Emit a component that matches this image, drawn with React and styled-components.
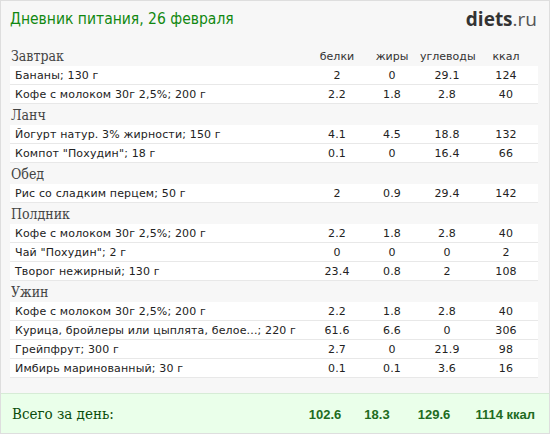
import React from "react";
import styled, { createGlobalStyle } from "styled-components";

const GlobalStyle = createGlobalStyle`
  html, body {
    margin: 0;
    padding: 0;
    background: #ffffff;
  }
  * {
    box-sizing: border-box;
  }
`;

const meals = [
  {
    title: "Завтрак",
    items: [
      ["Бананы; 130 г", "2", "0", "29.1", "124"],
      ["Кофе с молоком 30г 2,5%; 200 г", "2.2", "1.8", "2.8", "40"],
    ],
  },
  {
    title: "Ланч",
    items: [
      ["Йогурт натур. 3% жирности; 150 г", "4.1", "4.5", "18.8", "132"],
      ['Компот "Похудин"; 18 г', "0.1", "0", "16.4", "66"],
    ],
  },
  {
    title: "Обед",
    items: [["Рис со сладким перцем; 50 г", "2", "0.9", "29.4", "142"]],
  },
  {
    title: "Полдник",
    items: [
      ["Кофе с молоком 30г 2,5%; 200 г", "2.2", "1.8", "2.8", "40"],
      ['Чай "Похудин"; 2 г', "0", "0", "0", "2"],
      ["Творог нежирный; 130 г", "23.4", "0.8", "2", "108"],
    ],
  },
  {
    title: "Ужин",
    items: [
      ["Кофе с молоком 30г 2,5%; 200 г", "2.2", "1.8", "2.8", "40"],
      ["Курица, бройлеры или цыплята, белое...; 220 г", "61.6", "6.6", "0", "306"],
      ["Грейпфрут; 300 г", "2.7", "0", "21.9", "98"],
      ["Имбирь маринованный; 30 г", "0.1", "0.1", "3.6", "16"],
    ],
  },
];

const columns = ["белки", "жиры", "углеводы", "ккал"];

export default function App() {
  return (
    <>
      <GlobalStyle />
      <Page>
        <Header>
          <Title>Дневник питания, 26 февраля</Title>
          <Logo>
            <b>diets</b>.ru
          </Logo>
        </Header>
        <Diary>
          {meals.map((meal, i) => (
            <Meal key={meal.title}>
              <MealHead>
                <MealTitle>{meal.title}</MealTitle>
                {i === 0 && columns.map((c) => <ColHead key={c}>{c}</ColHead>)}
              </MealHead>
              {meal.items.map(([name, ...values], j) => (
                <Row key={j}>
                  <Name>{name}</Name>
                  {values.map((v, k) => (
                    <Cell key={k}>{v}</Cell>
                  ))}
                </Row>
              ))}
            </Meal>
          ))}
        </Diary>
        <Total>
          <TotalLabel>Всего за день:</TotalLabel>
          <TotalValue>102.6</TotalValue>
          <TotalValue>18.3</TotalValue>
          <TotalValue>129.6</TotalValue>
          <TotalValue $last>1114 ккал</TotalValue>
        </Total>
      </Page>
    </>
  );
}

const Page = styled.div`
  width: 550px;
  height: 434px;
  background: #f7f7f7;
  border: 1px solid #dedede;
  display: flex;
  flex-direction: column;
  overflow: hidden;
`;

const Header = styled.div`
  display: flex;
  justify-content: space-between;
  align-items: center;
  height: 36px;
  padding: 0 12px 0 9px;
`;

const Title = styled.h1`
  margin: 0;
  font-family: "DejaVu Sans", Verdana, sans-serif;
  font-stretch: semi-condensed;
  font-weight: normal;
  font-size: 15.5px;
  color: #118811;
`;

const Logo = styled.div`
  font-family: "Open Sans", "DejaVu Sans", sans-serif;
  font-size: 19px;
  color: #555;
  b {
    color: #333;
    font-weight: 700;
  }
`;

const Diary = styled.div`
  flex: 1;
  padding: 8px 11px 0 9px;
`;

const Meal = styled.div``;

const grid = `
  display: grid;
  grid-template-columns: 1fr 54px 56px 54px 64px;
  align-items: center;
`;

const MealHead = styled.div`
  ${grid}
  height: 21px;
`;

const MealTitle = styled.div`
  font-family: "DejaVu Serif", Georgia, serif;
  font-stretch: semi-condensed;
  font-size: 14px;
  color: #444;
  padding-left: 1px;
`;

const ColHead = styled.div`
  font-family: "DejaVu Sans", Tahoma, sans-serif;
  font-size: 11px;
  color: #333;
  text-align: center;
  padding-top: 2px;
`;

const Row = styled.div`
  ${grid}
  height: 19px;
  background: #ffffff;
  border-bottom: 1px solid #e8e8e8;
  font-family: "DejaVu Sans", Verdana, sans-serif;
  font-size: 11px;
  letter-spacing: 0.15px;
  color: #222;
`;

const Name = styled.div`
  padding-left: 5px;
  white-space: nowrap;
`;

const Cell = styled.div`
  text-align: center;
`;

const Total = styled.div`
  display: grid;
  grid-template-columns: 1fr 56px 48px 66px 68px;
  align-items: center;
  height: 41px;
  margin-bottom: -1px;
  padding: 0 14px 0 11px;
  background: #eaffea;
  border-top: 1px solid #d6ecd6;
`;

const TotalLabel = styled.div`
  font-family: "DejaVu Serif", Georgia, serif;
  font-stretch: semi-condensed;
  font-size: 15px;
  color: #0b4d0b;
`;

const TotalValue = styled.div`
  font-family: "Liberation Sans", Arial, sans-serif;
  font-weight: bold;
  font-size: 13px;
  color: #216b21;
  text-align: ${(p) => (p.$last ? "right" : "center")};
`;
